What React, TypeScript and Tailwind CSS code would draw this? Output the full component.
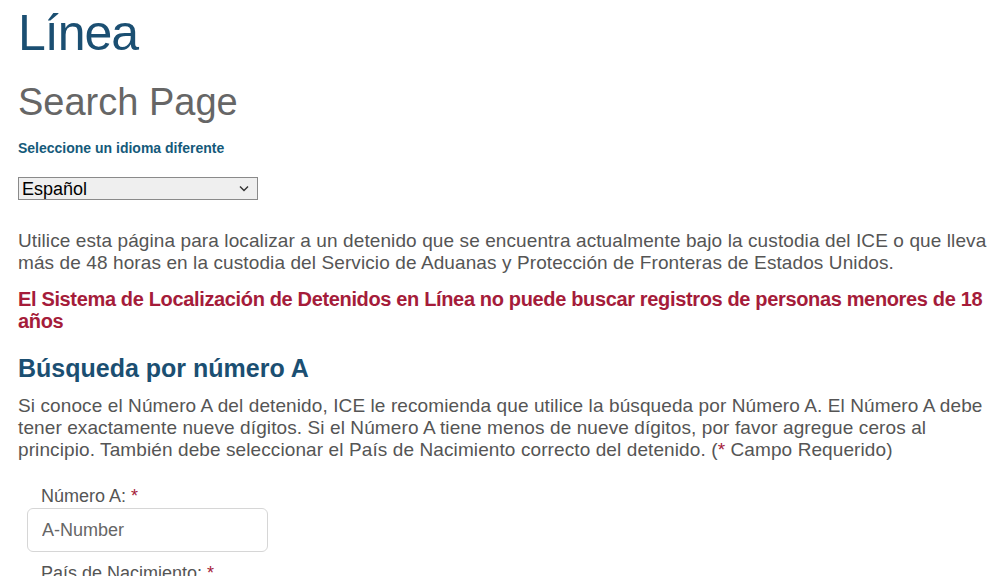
export default function App() {
  return (
    <div className="w-[1000px] h-[576px] overflow-hidden bg-white font-['Liberation_Sans',Arial,sans-serif]">
      <div className="pl-[18px] pr-[8px]">
        {/* Page title, scrolled so only the second line shows */}
        <h1 className="mt-[-42px] text-[50px] leading-[50px] text-[#1b4f72] tracking-[-1px]">
          Sistema de Localización de Detenidos en Línea
        </h1>

        <h2 className="mt-[24px] text-[38px] leading-[40px] text-[#666666]">Search Page</h2>

        <label className="mt-[17px] block text-[14px] leading-[18px] font-bold text-[#155a7a]">
          Seleccione un idioma diferente
        </label>
        <div className="mt-[20px] relative w-[240px]">
          <select className="block w-full h-[23px] border border-[#8a8a8a] bg-[#efefef] pl-[3px] text-[18px] leading-[20px] text-black appearance-none">
            <option>Español</option>
            <option>English</option>
          </select>
          <svg
            className="absolute right-[9px] top-[8px] pointer-events-none"
            width="10"
            height="7"
            viewBox="0 0 10 7"
          >
            <path d="M1 1.5l4 4 4-4" fill="none" stroke="#333" strokeWidth="1.4" />
          </svg>
        </div>

        <p className="mt-[30px] text-[19px] leading-[22px] text-[#555555] tracking-[0.1px]">
          Utilice esta página para localizar a un detenido que se encuentra actualmente bajo la custodia del ICE o que lleva
          más de 48 horas en la custodia del Servicio de Aduanas y Protección de Fronteras de Estados Unidos.
        </p>

        <p className="mt-[14px] text-[20px] leading-[22px] font-bold text-[#a51c3a] tracking-[-0.35px]">
          El Sistema de Localización de Detenidos en Línea no puede buscar registros de personas menores de 18 años
        </p>

        <h3 className="mt-[21px] text-[25px] leading-[30px] font-bold text-[#1b4f72]">Búsqueda por número A</h3>

        <p className="mt-[12px] text-[19px] leading-[22px] text-[#555555] tracking-[0.1px]">
          Si conoce el Número A del detenido, ICE le recomienda que utilice la búsqueda por Número A. El Número A debe
          tener exactamente nueve dígitos. Si el Número A tiene menos de nueve dígitos, por favor agregue ceros al
          principio. También debe seleccionar el País de Nacimiento correcto del detenido. (<span className="text-[#a51c3a]">*</span> Campo Requerido)
        </p>

        <div className="mt-[24px] pl-[9px]">
          <label className="block pl-[14px] text-[18px] leading-[22px] text-[#555555]">
            Número A: <span className="text-[#a51c3a]">*</span>
          </label>
          <input
            placeholder="A-Number"
            className="mt-[1px] block w-[241px] h-[44px] rounded-[6px] border border-[#d6d6d6] px-[14px] text-[18px] placeholder:text-[#666666]"
          />
          <label className="mt-[10px] block pl-[14px] text-[18px] leading-[22px] text-[#555555]">
            País de Nacimiento: <span className="text-[#a51c3a]">*</span>
          </label>
        </div>
      </div>
    </div>
  )
}
